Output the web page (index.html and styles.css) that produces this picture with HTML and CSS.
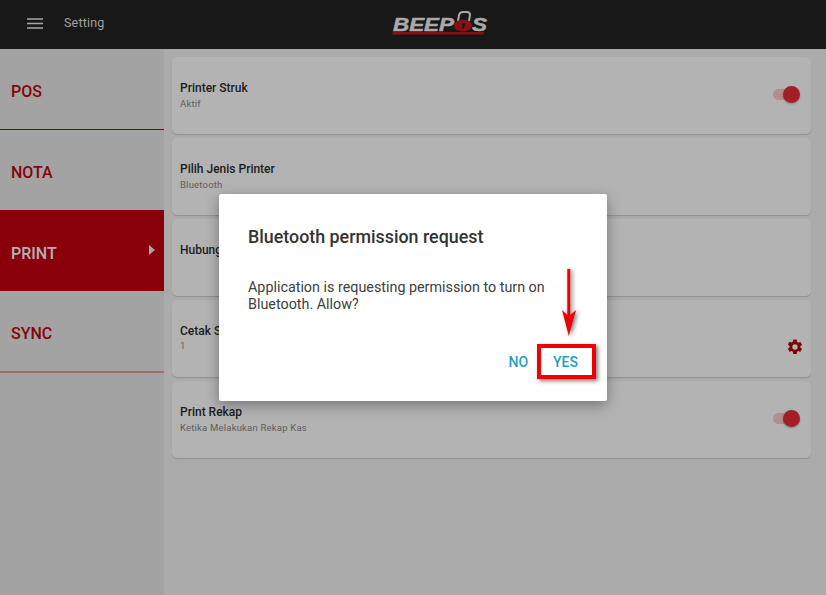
FILE: index.html
```html
<!DOCTYPE html>
<html lang="id">
<head>
<meta charset="utf-8">
<title>Setting</title>
<link rel="stylesheet" href="styles.css">
</head>
<body>
<div class="app">
  <header class="topbar">
    <div class="topbar-left">
      <svg class="menu-icon" width="16" height="12" viewBox="0 0 16 12"><path d="M0 2h16M0 6.5h16M0 11h16" stroke="#a8a8a8" stroke-width="1.6"/></svg>
      <span class="topbar-title">Setting</span>
    </div>
    <div class="logo">
      <svg width="98" height="30" viewBox="0 0 98 30">
        <path d="M67 12 L68 6 Q69 3 72 3 H76 Q79 3 79 6 L78 12" fill="none" stroke="#a9a9a9" stroke-width="2"/>
        <ellipse cx="72" cy="16.5" rx="9" ry="6" fill="#8a1017"/>
        <ellipse cx="72.5" cy="15.5" rx="1.6" ry="1.6" fill="#1a1a1a"/>
        <path d="M72 16h1.6l-.8 3.5h-1.6z" fill="#1a1a1a"/>
        <path d="M2 23 H93 L92.5 25.5 H1z" fill="#8a1017"/>
        <text x="2" y="22" class="logo-text" textLength="61" lengthAdjust="spacingAndGlyphs">BEEP</text>
        <text x="81" y="22" class="logo-text" textLength="15" lengthAdjust="spacingAndGlyphs">S</text>
      </svg>
    </div>
  </header>
  <div class="content">
    <nav class="sidebar">
      <div class="nav-item nav-ruled">POS</div>
      <div class="nav-item nav-short">NOTA</div>
      <div class="nav-item nav-active">PRINT<span class="nav-caret"></span></div>
      <div class="nav-item nav-ruled nav-ruled-soft">SYNC</div>
    </nav>
    <main class="cards">
      <section class="card">
        <div><div class="card-title">Printer Struk</div><div class="card-sub">Aktif</div></div>
        <span class="toggle"><span class="toggle-knob"></span></span>
      </section>
      <section class="card">
        <div><div class="card-title">Pilih Jenis Printer</div><div class="card-sub">Bluetooth</div></div>
      </section>
      <section class="card">
        <div><div class="card-title">Hubungkan Printer</div><div class="card-sub">&nbsp;</div></div>
      </section>
      <section class="card">
        <div><div class="card-title">Cetak Struk</div><div class="card-sub card-num">1</div></div>
        <svg class="gear" width="18" height="18" viewBox="0 0 24 24"><path fill="#7d0009" d="M19.14 12.94a7.1 7.1 0 0 0 0-1.88l2.03-1.58a.5.5 0 0 0 .12-.64l-1.92-3.32a.5.5 0 0 0-.6-.22l-2.39.96a7 7 0 0 0-1.63-.94l-.36-2.54A.5.5 0 0 0 13.9 2h-3.84a.5.5 0 0 0-.48.42l-.36 2.54a7.4 7.4 0 0 0-1.62.94l-2.39-.96a.5.5 0 0 0-.6.22L2.69 8.48a.5.5 0 0 0 .12.64l2.03 1.58a7.4 7.4 0 0 0 0 1.88l-2.03 1.58a.5.5 0 0 0-.12.64l1.92 3.32c.12.22.37.29.6.22l2.39-.96c.5.38 1.04.7 1.62.94l.36 2.54c.05.24.25.42.48.42h3.84c.24 0 .44-.18.47-.42l.36-2.54a7 7 0 0 0 1.63-.94l2.39.96c.22.08.47 0 .6-.22l1.92-3.32a.5.5 0 0 0-.12-.64zM12 15.6a3.6 3.6 0 1 1 0-7.2 3.6 3.6 0 0 1 0 7.2z"/></svg>
      </section>
      <section class="card">
        <div><div class="card-title">Print Rekap</div><div class="card-sub">Ketika Melakukan Rekap Kas</div></div>
        <span class="toggle"><span class="toggle-knob"></span></span>
      </section>
    </main>
  </div>
  <div class="dialog">
    <h2 class="dialog-title">Bluetooth permission request</h2>
    <p class="dialog-body">Application is requesting permission to turn on Bluetooth. Allow?</p>
    <div class="dialog-actions">
      <span class="dialog-btn">NO</span>
      <span class="dialog-btn">YES</span>
    </div>
  </div>
  <div class="highlight"></div>
  <svg class="arrow" width="20" height="70" viewBox="0 0 20 70">
    <path d="M8.3 1h3v46L17 42 9.8 68 3 42l5.3 5z" fill="#f00000"/>
  </svg>
</div>
</body>
</html>
```
FILE: styles.css
```css
* { box-sizing: border-box; }
html, body { margin: 0; padding: 0; }
body { width: 826px; height: 595px; overflow: hidden; font-family: Roboto, "Noto Sans", sans-serif; }
.app { position: relative; width: 826px; height: 595px; display: flex; flex-direction: column; background: #ababab; }

.topbar { height: 49px; flex: none; background: #181818; display: flex; align-items: center; position: relative; padding-bottom: 4px; }
.topbar-left { display: flex; align-items: center; padding-left: 27px; gap: 21px; }
.topbar-title { color: #a2a2a2; font-size: 12.5px; line-height: 16px; letter-spacing: .2px; }
.logo { position: absolute; left: 391px; top: 9px; width: 98px; height: 30px; }
.logo-text { font-family: "Liberation Sans", sans-serif; font-weight: 700; font-style: italic; font-size: 18px; fill: #a9a9a9; stroke: #a9a9a9; stroke-width: .5px; }

.content { flex: 1; display: flex; min-height: 0; }
.sidebar { width: 164px; flex: none; background: #a3a3a3; }
.nav-item { height: 81px; display: flex; align-items: center; padding: 4px 11px 0; position: relative; color: #88040c; font-size: 16px; font-weight: 500; }
.nav-short { height: 80px; }
.nav-ruled { border-bottom: 1px solid #6d0a10; }
.nav-ruled-soft { height: 82px; padding-top: 5px; border-bottom: 2px solid #a56a6e; }
.nav-active { background: #87000a; color: #b2b2b2; padding-top: 6px; }
.nav-caret { position: absolute; right: 9px; top: 35px; border-left: 6px solid #a8a8a8; border-top: 5px solid transparent; border-bottom: 5px solid transparent; }

.cards { flex: 1; display: flex; flex-direction: column; gap: 4px; padding: 8px 15px 0 8px; }
.card { height: 77px; background: #b3b3b3; border-radius: 5px; box-shadow: 0 1px 1px #8f8f8f; display: flex; align-items: center; justify-content: space-between; padding: 0 9px 1px 8px; }
.card-title { color: #1c1c1c; font-size: 12px; line-height: 15px; font-weight: 500; }
.card-sub { color: #5d5d5d; font-size: 9.5px; line-height: 12px; margin-top: 2px; letter-spacing: .2px; }
.card-num { margin-top: 1px; }
.toggle { width: 25px; height: 11px; border-radius: 6px; background: #b38d90; position: relative; margin-right: 4px; margin-top: -1px; }
.toggle-knob { position: absolute; right: -2px; top: -3px; width: 17px; height: 17px; border-radius: 50%; background: #a31f26; box-shadow: 0 1px 2px rgba(0,0,0,.3); }
.gear { margin-right: -2px; margin-top: 17px; }

.dialog { position: absolute; left: 219px; top: 194px; width: 388px; height: 207px; background: #fff; border-radius: 2px; box-shadow: 0 4px 14px rgba(0,0,0,.35); padding: 33px 29px 0; display: flex; flex-direction: column; }
.dialog-title { margin: 0; font-size: 17.85px; line-height: 20px; font-weight: 500; color: #333; }
.dialog-body { margin: 32px 0 0; font-size: 14.34px; line-height: 17px; color: #404040; }
.dialog-actions { position: absolute; right: 29px; top: 160px; display: flex; gap: 25px; }
.dialog-btn { color: #1f9fbd; font-size: 14px; line-height: 16px; font-weight: 500; }

.highlight { position: absolute; left: 537px; top: 344px; width: 59px; height: 35px; border: 4px solid #f00000; box-shadow: 2px 2px 4px rgba(0,0,0,.5); }
.arrow { position: absolute; left: 559px; top: 268px; filter: drop-shadow(2px 1px 2px rgba(0,0,0,.5)); }
```
